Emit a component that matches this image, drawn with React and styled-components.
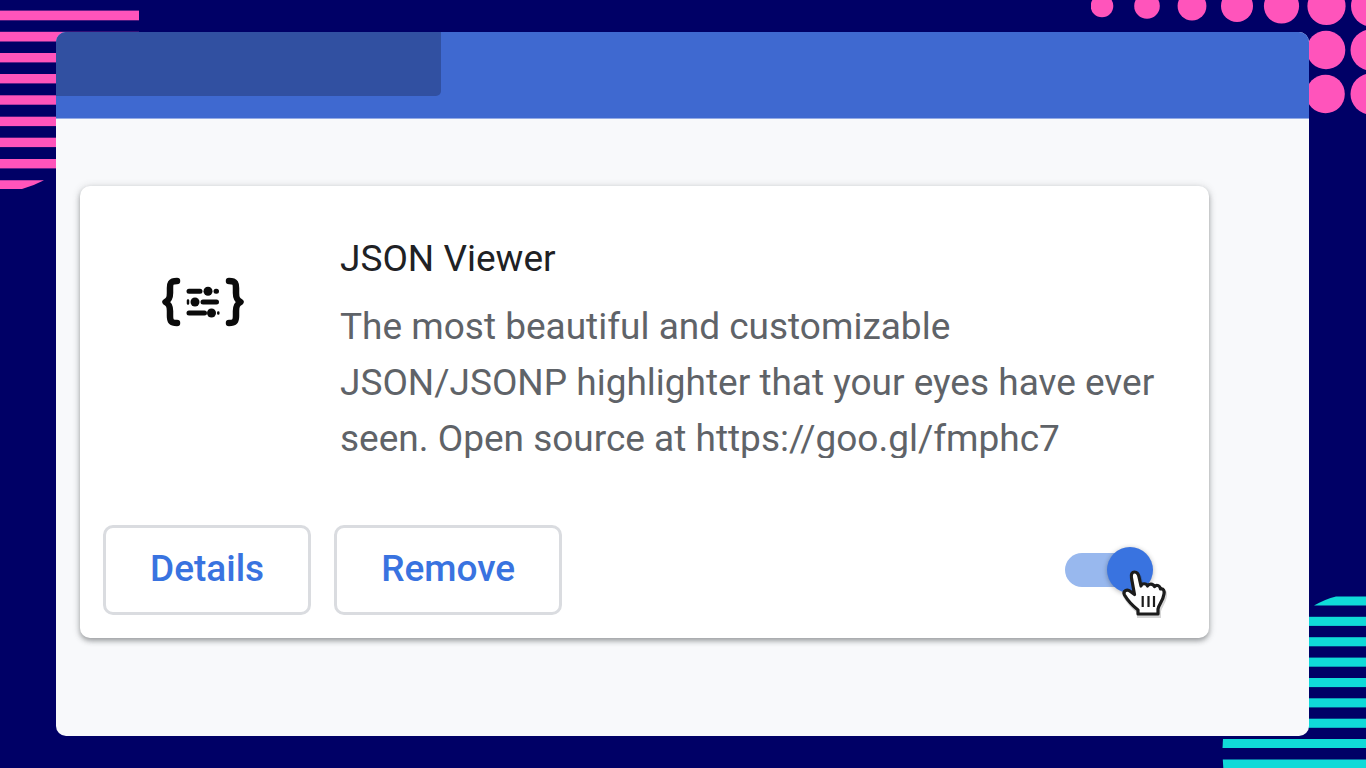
import { useState } from "react";
import styled, { createGlobalStyle } from "styled-components";

const GlobalStyle = createGlobalStyle`
* {
  box-sizing: border-box;
}
body {
  margin: 0;
  background: #000066;
  font-family: Roboto, "Liberation Sans", sans-serif;
}
`;

const Page = styled.div`
position: relative;
min-height: 100vh;
display: flex;
padding: 32px 57px 32px 56px;
overflow: hidden;
`;

const Decoration = styled.svg`
position: absolute;
top: ${props => props.$bottom ? "auto" : "0"};
bottom: ${props => props.$bottom ? "0" : "auto"};
left: ${props => props.$right ? "auto" : "0"};
right: ${props => props.$right ? "0" : "auto"};
`;

const Window = styled.main`
position: relative;
flex: 1;
min-width: 0;
display: flex;
flex-direction: column;
background: #f8f9fb;
border-radius: 10px;
overflow: hidden;
`;

const Toolbar = styled.header`
height: 87px;
display: flex;
align-items: flex-start;
background: #3f69d0;
border-bottom: 1px solid #93aae5;
`;

const SearchBlock = styled.div`
width: 385px;
height: 64px;
background: #3150a1;
border-radius: 0 0 5px 0;
`;

const Content = styled.div`
flex: 1;
padding: 67px 100px 98px 24px;
display: flex;
`;

const Card = styled.article`
flex: 1;
min-width: 0;
display: flex;
flex-direction: column;
justify-content: space-between;
padding: 44px 23px 23px;
background: #ffffff;
border-radius: 10px;
box-shadow: 0 3px 5px rgba(60, 64, 67, 0.4), 0 1px 8px rgba(60, 64, 67, 0.2);
`;

const Summary = styled.div`
display: flex;
align-items: flex-start;
`;

const IconBox = styled.div`
flex: none;
width: 237px;
padding: 44px 0 0 47px;
`;

const Info = styled.div`
flex: 1;
min-width: 0;
`;

const Title = styled.h1`
margin: 0;
font-size: 37px;
font-weight: 400;
line-height: 58px;
color: #202124;
`;

const Description = styled.p`
margin: 11px 0 0;
max-height: 159px;
overflow: hidden;
font-size: 37px;
line-height: 56px;
color: #5f6368;
`;

const Actions = styled.div`
display: flex;
align-items: center;
gap: 23px;
padding-right: 33px;
`;

const ActionButton = styled.button`
height: 90px;
padding: 0 44px 4px;
font-family: inherit;
font-size: 37px;
font-weight: 500;
color: #3973e0;
background: #ffffff;
border: 3px solid #dadce0;
border-radius: 10px;
cursor: pointer;
`;

const Toggle = styled.label`
position: relative;
display: flex;
margin-left: auto;
`;

const Switch = styled.input`
appearance: none;
width: 88px;
height: 46px;
margin: 0;
display: flex;
align-items: center;
cursor: pointer;

&::before {
  content: "";
  width: 84px;
  height: 34px;
  border-radius: 17px;
  background: #98b8ee;
}
&::after {
  content: "";
  width: 46px;
  height: 46px;
  margin-left: -84px;
  border-radius: 50%;
  background: #80868b;
  box-shadow: 0 1px 5px rgba(0, 0, 0, 0.3);
}
&:checked::after {
  margin-left: -42px;
  background: #3973e0;
}
`;

// lies over the switch, like the real mouse pointer
const Pointer = styled.svg`
position: absolute;
right: -15px;
bottom: -28px;
pointer-events: none;
`;

function PinkStripes() {
  const rows = [53, 74, 95.3, 116.7, 137.7, 159];
  return <Decoration width="140" height="190" fill="#ff54bb" aria-hidden="true">
    <rect x="0" y="10.6" width="139" height="9.7" />
    <rect x="0" y="31.8" width="139" height="9.7" />
    {rows.map(y => <rect key={y} x="0" y={y} width="60" height="9.4" />)}
    <path d="M0 180.2H44Q33 186 22 189H0Z" />
  </Decoration>
}

function PinkDots() {
  const dots = [
    [11, 6, 11.3], [56, 6, 12.8], [101, 6, 14.4], [146, 6, 16], [190.5, 6, 17.6],
    [235.5, 6, 19.1], [280.5, 6, 20.5],
    [235, 50, 19.3], [280, 50, 20.5],
    [234.5, 94, 19.3], [280, 94, 20.5]
  ];
  return <Decoration $right width="275" height="120" fill="#ff54bb" aria-hidden="true">
    {dots.map(([x, y, r]) => <circle key={x + "-" + y} cx={x} cy={y} r={r} />)}
  </Decoration>
}

function TealStripes() {
  const rows = [20.8, 41.2, 61.6, 82, 102.3, 122.7];
  return <Decoration $right $bottom width="144" height="172" fill="#10dad8" aria-hidden="true">
    <path d="M92 9.6Q103 3 114 .4H144V9.6Z" />
    {rows.map(y => <rect key={y} x="80" y={y} width="64" height="9.1" />)}
    <path d="M1 143.1H144V152H.5Z" />
    <path d="M.8 163.5H144V172H1.3Z" />
  </Decoration>
}

function ViewerIcon() {
  return <svg width="110" height="56" viewBox="0 0 110 56" fill="none" stroke="#0b0b0b" strokeLinecap="round" aria-hidden="true">
    <g strokeWidth="6.500" strokeLinejoin="round">
      <path d="M27 7C20 7 20 10 20 14V19C20 24 19 26 15.500 28C19 30 20 32 20 37V42C20 47 21 49 27 49" />
      <path d="M79 7C86 7 86 10 86 14V19C86 24 87 26 90.500 28C87 30 86 32 86 37V42C86 47 85 49 79 49" />
    </g>
    <g strokeWidth="5">
      <path d="M39 17.300H50M66 17.300H66.500M53 28H66.500M39 39H54.500" />
    </g>
    <path d="M38 26.500V29.500M68.300 38.500V39.500" strokeWidth="2.500" />
    <g fill="#0b0b0b" stroke="none">
      <circle cx="58" cy="17.300" r="4.500" />
      <circle cx="45" cy="28" r="4.500" />
      <circle cx="61.500" cy="39" r="4.500" />
    </g>
  </svg>
}

function HandPointer() {
  const hand = "M16.500 5C19.500 5 20.500 7.500 21 10L23 19C23.500 16 28.500 16 29.500 19C31 16.500 35 16.500 36.500 19.500C39 17 42 19 42.500 22C45.500 21 46.500 24 46 27C45 34 41 37 40 42V47H20V43C15 39 10 34 6.500 28C4.500 24 9 21.500 12.500 24.500L16.500 27.500L13.500 11C13 8 13.500 5 16.500 5Z";
  return <Pointer width="50" height="54" viewBox="0 0 50 54" aria-hidden="true">
    <path d={hand} fill="#000000" stroke="#000000" strokeWidth="4" opacity=".16" transform="translate(1 2)" />
    <path d={hand} fill="#ffffff" stroke="#1c1c1c" strokeWidth="3.200" strokeLinejoin="round" />
    <path d="M24.700 29V40M30.500 29V40M36 29V40" stroke="#1c1c1c" strokeWidth="2.200" />
  </Pointer>
}

export default function App() {
  const [enabled, setEnabled] = useState(true);

  return <>
    <GlobalStyle />
    <Page>
      <PinkStripes />
      <PinkDots />
      <TealStripes />
      <Window>
        <Toolbar>
          <SearchBlock />
        </Toolbar>
        <Content>
          <Card>
            <Summary>
              <IconBox>
                <ViewerIcon />
              </IconBox>
              <Info>
                <Title>JSON Viewer</Title>
                <Description>
                  The most beautiful and customizable JSON/JSONP highlighter that your eyes have ever seen. Open source at https://goo.gl/fmphc7
                </Description>
              </Info>
            </Summary>
            <Actions>
              <ActionButton type="button">Details</ActionButton>
              <ActionButton type="button">Remove</ActionButton>
              <Toggle>
                <Switch
                  type="checkbox"
                  aria-label="Enable JSON Viewer"
                  checked={enabled}
                  onChange={(e) => setEnabled(e.target.checked)}
                />
                <HandPointer />
              </Toggle>
            </Actions>
          </Card>
        </Content>
      </Window>
    </Page>
  </>
}
